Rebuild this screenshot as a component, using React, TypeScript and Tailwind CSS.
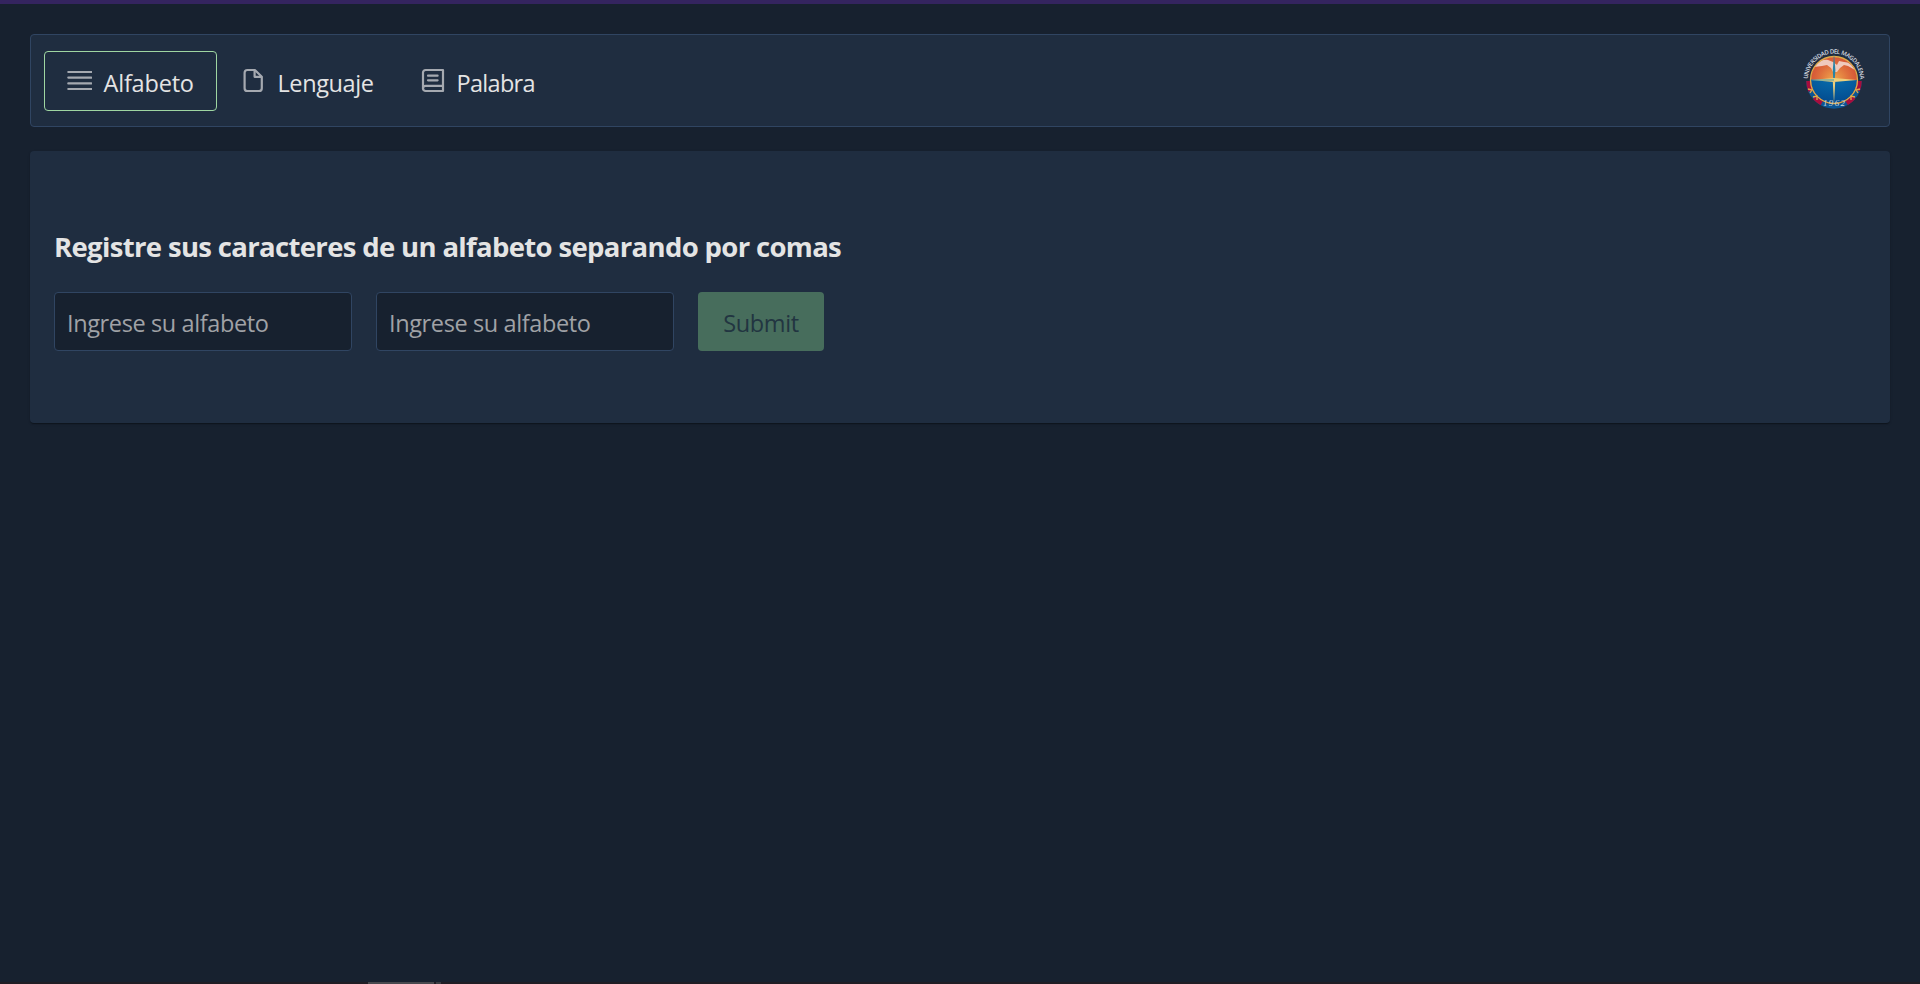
import type { ReactNode } from "react";

function JustifyIcon() {
  return (
    <svg width="26" height="26" viewBox="0 0 26 26" fill="none" stroke="#a5a9b0" strokeWidth="2.200" strokeLinecap="round">
      <path d="M2.300 4h23M2.300 9.600h23M2.300 15.400h23M2.300 21h23" />
    </svg>
  );
}

function FileIcon() {
  return (
    <svg width="26" height="26" viewBox="0 0 26 26" fill="none" stroke="#a5a9b0" strokeWidth="2.200" strokeLinejoin="round">
      <path d="M14.900 2H7.400A2.800 2.800 0 0 0 4.600 4.800v15.400A2.800 2.800 0 0 0 7.400 23h11.600a2.800 2.800 0 0 0 2.800-2.800V8.700Z" />
      <path d="M14.600 2.500v6.300h6.900" />
    </svg>
  );
}

function BookIcon() {
  return (
    <svg width="26" height="26" viewBox="0 0 26 26" fill="none" stroke="#a5a9b0" strokeWidth="2.200" strokeLinejoin="round" strokeLinecap="round">
      <path d="M24 2H6.600A2.600 2.600 0 0 0 4 4.600v15.800A2.600 2.600 0 0 0 6.600 23H24Z" />
      <path d="M4 20.400a2.600 2.600 0 0 1 2.600-2.500H24M9 7.700h9.600M9 12.300h9.600" />
    </svg>
  );
}

function UniversityLogo() {
  return (
    <svg width="66" height="66" viewBox="-33 -32 66 66" className="overflow-visible">
      <defs>
        <radialGradient id="sky" cx="0.5" cy="0.5" r="0.55">
          <stop offset="0" stopColor="#f0a94c" />
          <stop offset="0.6" stopColor="#de6d3c" />
          <stop offset="1" stopColor="#d34f35" />
        </radialGradient>
        <radialGradient id="sea" cx="0.5" cy="0" r="1">
          <stop offset="0" stopColor="#066bab" />
          <stop offset="1" stopColor="#034a8e" />
        </radialGradient>
        <path id="arc" d="M-26-2.600A26.100 26.100 0 0 1 26-2.600" />
      </defs>
      <path d="M-25.500 1A25.500 25.500 0 0 0 25.500 1" fill="none" stroke="#0b5594" strokeWidth="4.500" />
      <path d="M-25.500 1A25.500 25.500 0 0 0 25.500 1" fill="none" stroke="#a80d3c" strokeWidth="4.500" strokeDasharray="10 8 9 26.100 9 8 10 20" />
      <circle r="23.300" fill="url(#sky)" />
      <path d="M-23 0A23 23 0 0 0 23 0Z" fill="url(#sea)" />
      <path d="M-20-13C-17-18-12-21-6-20L-1-18 3-15 5-19 10-18C15-18 18-15 21-10L14-14 10-15 6-12 3-8-1-8-3-12-7-15-12-14Z" fill="#efcabd" />
      <circle r="23.500" fill="none" stroke="#e0aa49" strokeWidth="1.300" />
      <path d="M-23 0 0-2 23 0 0 2ZM0 23-1.300 0H1.300Z" fill="#edcf7b" />
      <path d="M-23 0H0" stroke="#168bb9" strokeWidth="0.800" />
      <path d="M-1.200-10 0-26 1.400-10 .8-2H-.8Z" fill="#2684a7" />
      <path d="M-26 9l4 1-2 3M-21 17l4-1 0 4M26 9l-4 1 2 3M21 17l-4-1 0 4" fill="none" stroke="#e0aa49" strokeWidth="1.300" />
      <text fill="#d5dae0" className="font-['Open_Sans',sans-serif] text-[6px] font-semibold tracking-[-0.450px]">
        <textPath href="#arc" startOffset="50%" textAnchor="middle">UNIVERSIDAD DEL MAGDALENA</textPath>
      </text>
      <text x="0" y="26" textAnchor="middle" textLength="22" fill="#cbd8dd" className="font-['Liberation_Serif',serif] text-[9px] italic">1962</text>
    </svg>
  );
}

function NavItem({ icon, label, size }: { icon: ReactNode; label: string; size: string }) {
  return (
    <a className={`flex h-[60px] items-center rounded border ${size}`}>
      {icon}
      <span className="ml-[11.500px] pt-1 text-[23.500px] leading-8">{label}</span>
    </a>
  );
}

function AlphabetInput() {
  return (
    <input
      placeholder="Ingrese su alfabeto"
      className="h-[59px] w-[298px] rounded border border-[#304562] bg-[#17212f] pt-0.5 pl-3 text-[23.500px] tracking-[-0.380px] text-[#e2e2e2] outline-none placeholder:text-[#a0a2a6]"
    />
  );
}

export default function App() {
  return (
    <div className="flex h-[984px] flex-col overflow-hidden bg-[#17212f] font-['Open_Sans','Noto_Sans',sans-serif] text-[#e4e4e4]">
      <div className="h-1 shrink-0 bg-[#34245f]" />
      <main className="flex flex-1 flex-col gap-6 px-[30px] pt-[30px]">
        <nav className="flex h-[93px] items-center justify-between rounded border border-[#304562] bg-[#1f2d40] pr-[22px] pl-[13px]">
          <div className="flex">
            <NavItem icon={<JustifyIcon />} label="Alfabeto" size="w-[173px] border-[#9fd6a2] pl-[21px] tracking-[-0.200px]" />
            <NavItem icon={<FileIcon />} label="Lenguaje" size="w-[179px] border-transparent pl-[22px] tracking-[-0.400px]" />
            <NavItem icon={<BookIcon />} label="Palabra" size="w-[161px] border-transparent pl-[22px] tracking-[-0.700px]" />
          </div>
          <UniversityLogo />
        </nav>
        <section className="h-[272px] rounded bg-[#1f2d40] px-6 pt-[75px] shadow-[0_2px_1px_-1px_rgba(0,0,0,.2),0_1px_1px_rgba(0,0,0,.14),0_1px_3px_rgba(0,0,0,.12)]">
          <h1 className="h-[66px] text-[27.500px] leading-[42px] font-bold tracking-[-0.660px] whitespace-nowrap">
            Registre sus caracteres de un alfabeto separando por comas
          </h1>
          <form className="flex gap-6">
            <AlphabetInput />
            <AlphabetInput />
            <button type="button" className="h-[59px] w-[126px] rounded bg-[#476d5c] pt-1 text-[23.500px] tracking-[-0.400px] text-[#223541]">Submit</button>
          </form>
        </section>
      </main>
      <div className="flex h-0.5 shrink-0 gap-0.5 bg-[#201d24] pl-[368px]">
        <div className="w-[66px] bg-[#48494e]" />
        <div className="w-[5px] bg-[#3b3d43]" />
      </div>
    </div>
  );
}
